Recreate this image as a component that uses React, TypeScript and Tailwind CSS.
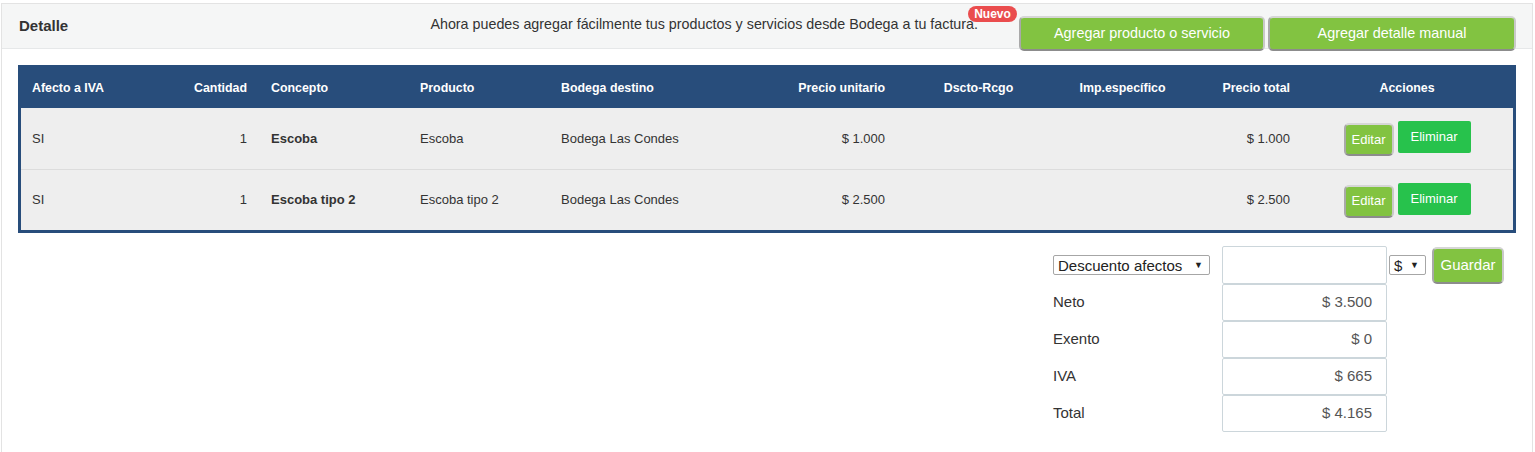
import React from 'react';

type Row = {
  iva: string;
  cantidad: number;
  concepto: string;
  producto: string;
  bodega: string;
  unitario: string;
  total: string;
};

const rows: Row[] = [
  { iva: 'SI', cantidad: 1, concepto: 'Escoba', producto: 'Escoba', bodega: 'Bodega Las Condes', unitario: '$ 1.000', total: '$ 1.000' },
  { iva: 'SI', cantidad: 1, concepto: 'Escoba tipo 2', producto: 'Escoba tipo 2', bodega: 'Bodega Las Condes', unitario: '$ 2.500', total: '$ 2.500' },
];

const totals = [
  { label: 'Neto', value: '$ 3.500' },
  { label: 'Exento', value: '$ 0' },
  { label: 'IVA', value: '$ 665' },
  { label: 'Total', value: '$ 4.165' },
];

const gridCols = 'grid grid-cols-[151px_88px_149px_141px_210px_136px_165px_123px_117px_212px]';

const raised = 'bg-[#82c341] text-white rounded-[5px] border-2 border-t-[#d6d6d6] border-l-[#a9a9a9] border-r-[#c9c9c9] border-b-[#8c8c8c]';

function FakeSelect({ label, className }: { label: string; className: string }) {
  return (
    <div className={`flex items-center justify-between h-[20px] border border-[#a6a6a6] rounded-[2px] bg-white pl-[4px] pr-[6px] text-[15px] leading-none text-[#222] ${className}`}>
      <span>{label}</span>
      <span className="text-[9px] text-[#222]">▼</span>
    </div>
  );
}

export default function App() {
  return (
    <div className="w-full min-h-[452px] bg-white pl-px pr-[2px] pt-[3px] font-['Liberation_Sans',Arial,sans-serif] text-[#333]">
      <div className="border border-[#e3e3e3] bg-white pb-[40px]">
        {/* Header */}
        <div className="h-[45px] flex items-start bg-[#f5f6f6] border-b border-[#e6e8e9] px-4">
          <h2 className="self-center text-[15px] font-bold text-[#333] pl-px">Detalle</h2>
          <div className="ml-auto flex items-start">
            <p className="mt-[11px] mr-[41px] text-[14.3px] leading-[18px] text-[#333]">
              Ahora puedes agregar fácilmente tus productos y servicios desde Bodega a tu factura.
            </p>
            <div className="relative mt-[12px] flex gap-[3px]">
              <span className="absolute -top-[10px] -left-[51px] w-[49px] h-[16px] rounded-full bg-[#ea4d4e] text-white text-[12px] font-bold leading-[16px] text-center">
                Nuevo
              </span>
              <button className={`${raised} w-[246px] h-[35px] text-[14.4px]`}>Agregar producto o servicio</button>
              <button className={`${raised} w-[248px] h-[35px] text-[14.4px]`}>Agregar detalle manual</button>
            </div>
          </div>
        </div>

        <div className="px-4 pt-4">
          {/* Table */}
          <div className="border-[3px] border-[#284d7b] bg-[#eeeeee]">
            <div className={`${gridCols} h-[40px] items-center bg-[#284d7b] text-white text-[12.4px] font-bold`}>
              <div className="pl-[11px]">Afecto a IVA</div>
              <div className="text-right pr-[13px]">Cantidad</div>
              <div className="pl-[11px]">Concepto</div>
              <div className="pl-[11px]">Producto</div>
              <div className="pl-[11px]">Bodega destino</div>
              <div className="text-right pr-[11px]">Precio unitario</div>
              <div className="text-center">Dscto-Rcgo</div>
              <div className="text-center">Imp.específico</div>
              <div className="text-right pr-[11px]">Precio total</div>
              <div className="text-center">Acciones</div>
            </div>
            {rows.map((r, i) => (
              <div key={i} className={`${gridCols} h-[61px] items-center text-[13px] text-[#333] ${i > 0 ? 'border-t border-[#dcdcdc]' : ''}`}>
                <div className="pl-[11px]">{r.iva}</div>
                <div className="text-right pr-[13px]">{r.cantidad}</div>
                <div className="pl-[11px] font-bold">{r.concepto}</div>
                <div className="pl-[11px]">{r.producto}</div>
                <div className="pl-[11px]">{r.bodega}</div>
                <div className="text-right pr-[11px]">{r.unitario}</div>
                <div />
                <div />
                <div className="text-right pr-[11px]">{r.total}</div>
                <div className="flex justify-center items-start gap-[4px]">
                  <button className={`${raised} mt-[2px] w-[50px] h-[33px] text-[13px]`}>Editar</button>
                  <button className="w-[73px] h-[32px] rounded-[2px] bg-[#27c24c] text-white text-[13px]">Eliminar</button>
                </div>
              </div>
            ))}
          </div>

          {/* Totals */}
          <div className="mt-[13px] ml-auto mr-[12px] w-[451px] grid grid-cols-[169px_165px_auto_auto] items-center text-[15px]">
            <FakeSelect label="Descuento afectos" className="w-[157px]" />
            <div className="h-[38px] border border-[#ccd6db] rounded-[2px] bg-white" />
            <FakeSelect label="$" className="ml-[2px] w-[37px]" />
            <button className={`${raised} ml-[6px] w-[72px] h-[37px] text-[15px]`}>Guardar</button>
            {totals.map((t) => (
              <React.Fragment key={t.label}>
                <div className="text-[#333]">{t.label}</div>
                <div className="h-[37px] border border-[#ccd6db] rounded-[2px] bg-white flex items-center justify-end pr-[14px] text-[#555]">
                  {t.value}
                </div>
                <div />
                <div />
              </React.Fragment>
            ))}
          </div>
        </div>
      </div>
    </div>
  );
}
